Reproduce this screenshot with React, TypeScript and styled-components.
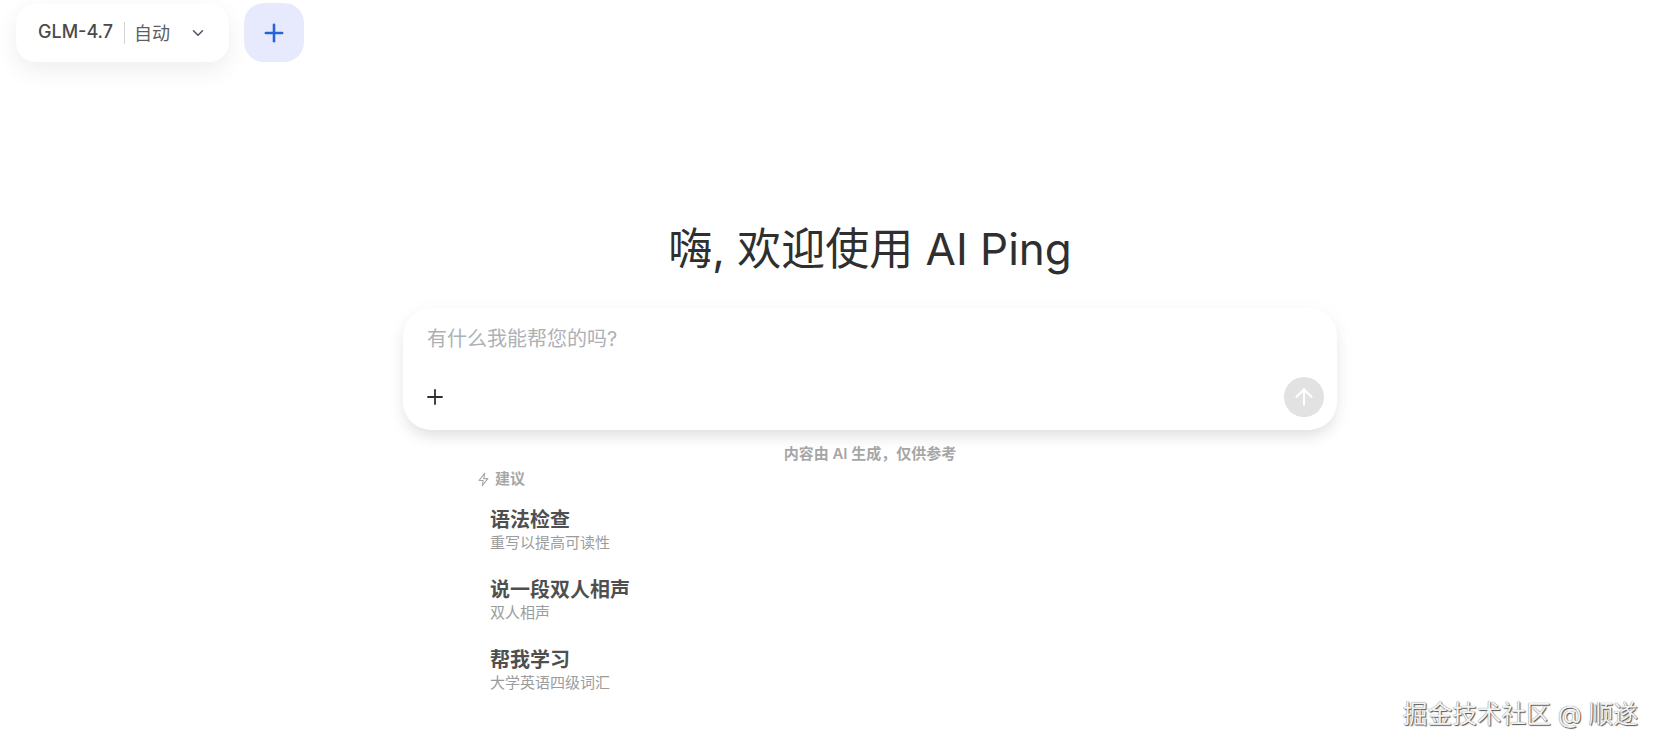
import { ChevronDown, Plus, ArrowUp } from 'lucide-react';
import styled, { createGlobalStyle } from 'styled-components';

const suggestions = [
  { title: '语法检查', sub: '重写以提高可读性' },
  { title: '说一段双人相声', sub: '双人相声' },
  { title: '帮我学习', sub: '大学英语四级词汇' },
];

export default function App() {
  return (
    <>
      <GlobalStyle />
      <Page>
        <TopBar>
          <ModelSelect>
            <ModelName>GLM-4.7</ModelName>
            <Divider />
            <ModelMode>自动</ModelMode>
            <ChevronDown size={20} strokeWidth={2} color="#4b5563" />
          </ModelSelect>
          <NewButton>
            <Plus size={28} strokeWidth={2.2} color="#2563d8" />
          </NewButton>
        </TopBar>
        <Main>
          <Title>嗨, 欢迎使用 AI Ping</Title>
          <InputCard>
            <Placeholder>有什么我能帮您的吗?</Placeholder>
            <InputActions>
              <AttachButton>
                <Plus size={24} strokeWidth={1.8} color="#2f2f2f" />
              </AttachButton>
              <SendButton>
                <ArrowUp size={26} strokeWidth={2} color="#ffffff" />
              </SendButton>
            </InputActions>
          </InputCard>
          <Disclaimer>内容由 AI 生成，仅供参考</Disclaimer>
          <Suggestions>
            <SuggestHeader>
              <svg width="15" height="15" viewBox="0 0 24 24" fill="none" stroke="#a8a8a8" strokeWidth="1.8" strokeLinejoin="round" strokeLinecap="round">
                <path d="M14 2 5 13.5h6.5L10 22l9-11.500h-6.500z" />
              </svg>
              建议
            </SuggestHeader>
            <SuggestList>
              {suggestions.map((s) => (
                <SuggestItem key={s.title}>
                  <SuggestTitle>{s.title}</SuggestTitle>
                  <SuggestSub>{s.sub}</SuggestSub>
                </SuggestItem>
              ))}
            </SuggestList>
          </Suggestions>
        </Main>
        <Watermark>掘金技术社区 @ 顺遂</Watermark>
      </Page>
    </>
  );
}

const GlobalStyle = createGlobalStyle`
  html, body {
    margin: 0;
    padding: 0;
    background: #fff;
    overflow: hidden;
  }
  body {
    font-family: Inter, "Noto Sans CJK SC", sans-serif;
  }
`;

const Page = styled.div`
  position: relative;
  width: 1660px;
  height: 751px;
  overflow: hidden;
  background: #fff;
`;

const TopBar = styled.div`
  display: flex;
  align-items: flex-end;
  gap: 15px;
  padding: 3px 0 0 16px;
`;

const ModelSelect = styled.div`
  display: flex;
  align-items: center;
  width: 213px;
  height: 58px;
  padding: 0 22px;
  box-sizing: border-box;
  border-radius: 20px;
  background: #fff;
  box-shadow: 0 8px 24px rgba(0, 0, 0, 0.07);
`;

const ModelName = styled.span`
  flex-shrink: 0;
  white-space: nowrap;
  margin-top: -3px;
  font-size: 18px;
  font-weight: 500;
  color: #4a4a4a;
`;

const Divider = styled.span`
  flex-shrink: 0;
  width: 1px;
  height: 22px;
  margin: 0 9px 0 11px;
  background: #d4d4d4;
`;

const ModelMode = styled.span`
  flex-shrink: 0;
  white-space: nowrap;
  margin: -3px 19px 0 0;
  font-size: 18px;
  color: #5e5e5e;
`;

const NewButton = styled.div`
  display: flex;
  align-items: center;
  justify-content: center;
  width: 60px;
  height: 59px;
  border-radius: 20px;
  background: #e7eafd;
`;

const Main = styled.div`
  display: flex;
  flex-direction: column;
  align-items: center;
  padding: 157px 0 0 80px;
`;

const Title = styled.h1`
  margin: 0;
  font-size: 44px;
  line-height: 60px;
  font-weight: 400;
  color: #2f2f2f;
`;

const InputCard = styled.div`
  display: flex;
  flex-direction: column;
  justify-content: space-between;
  width: 934px;
  height: 122px;
  margin-top: 29px;
  padding: 17px 13px 13px 20px;
  box-sizing: border-box;
  border-radius: 28px;
  background: #fff;
  box-shadow: 0 8px 16px -4px rgba(0, 0, 0, 0.12), 0 4px 24px rgba(0, 0, 0, 0.04);
`;

const Placeholder = styled.div`
  padding-left: 4px;
  font-size: 20px;
  line-height: 28px;
  color: #adb1b6;
`;

const InputActions = styled.div`
  display: flex;
  align-items: center;
  justify-content: space-between;
`;

const AttachButton = styled.div`
  display: flex;
  align-items: center;
`;

const SendButton = styled.div`
  display: flex;
  align-items: center;
  justify-content: center;
  width: 40px;
  height: 40px;
  border-radius: 50%;
  background: #e2e2e2;
`;

const Disclaimer = styled.div`
  margin-top: 14px;
  font-size: 15px;
  line-height: 20px;
  font-weight: 600;
  color: #a6a6a6;
`;

const Suggestions = styled.div`
  align-self: flex-start;
  margin: 5px 0 0 396px;
`;

const SuggestHeader = styled.div`
  display: flex;
  align-items: center;
  gap: 4px;
  font-size: 15px;
  line-height: 20px;
  font-weight: 600;
  color: #a6a6a6;
`;

const SuggestList = styled.div`
  display: flex;
  flex-direction: column;
  gap: 24px;
  margin: 18px 0 0 14px;
`;

const SuggestItem = styled.div`
  display: flex;
  flex-direction: column;
`;

const SuggestTitle = styled.div`
  font-size: 20px;
  line-height: 26px;
  font-weight: 600;
  color: #4f4f4f;
`;

const SuggestSub = styled.div`
  font-size: 15px;
  line-height: 20px;
  color: #9c9c9c;
`;

const Watermark = styled.div`
  position: absolute;
  right: 22px;
  bottom: 21px;
  font-size: 24.7px;
  line-height: 32px;
  color: #f4f4f4;
  text-shadow: 1px 1px 1px #555, 0 0 1px #666;
`;
